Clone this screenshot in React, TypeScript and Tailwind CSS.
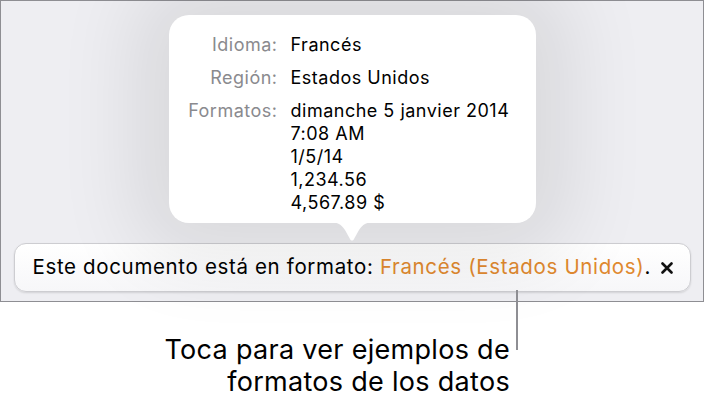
import React from "react";

const font = { fontFamily: "Inter, 'Noto Sans', sans-serif" };

export default function App() {
  return (
    <div className="w-[705px] h-[402px] bg-white" style={font}>
      <div className="w-[704px] h-[302px] border border-[#8e8e93] bg-[#eeeef2] flex flex-col items-center">
        <div className="relative mt-[14px] w-[367px] h-[208px] bg-white rounded-[20px] shadow-[0_0_80px_35px_rgba(0,0,0,0.09)] pt-[18px] text-[18px] leading-[23px] tracking-[0.5px]">
          <div className="grid grid-cols-[109px_1fr] gap-y-[10px]">
            <div className="text-right text-[#8a8a8e]">Idioma:</div>
            <div className="pl-[13px] text-black">Francés</div>
            <div className="text-right text-[#8a8a8e]">Región:</div>
            <div className="pl-[13px] text-black">Estados Unidos</div>
            <div className="text-right text-[#8a8a8e]">Formatos:</div>
            <div className="pl-[13px] text-black flex flex-col">
              <span>dimanche 5 janvier 2014</span>
              <span>7:08 AM</span>
              <span>1/5/14</span>
              <span>1,234.56</span>
              <span>4,567.89 $</span>
            </div>
          </div>
          <svg className="absolute left-[160px] top-[207px]" width="46" height="22" viewBox="0 0 46 22">
            <path d="M0 0 C8 0 12 2 16 8 L21 17 C22 19 24 19 25 17 L30 8 C34 2 38 0 46 0 Z" fill="white" />
          </svg>
        </div>
        <div className="mt-[20px] w-[677px] h-[49px] rounded-[12px] bg-gradient-to-b from-white to-[#f7f7f9] border border-[#cdcdd1] shadow-[0_1px_2px_rgba(0,0,0,0.12)] flex items-center pl-[18px] pr-[17px] text-[20.5px] tracking-[0.65px] text-black">
          <span>Este documento está en formato:&nbsp;</span>
          <span className="text-[#e0892f]">Francés (Estados Unidos)</span>
          <span>.</span>
          <span className="ml-auto flex items-center">
            <svg width="12" height="12" viewBox="0 0 12 12">
              <path d="M1.5 1.5 L10.5 10.5 M10.5 1.5 L1.5 10.5" stroke="#111" strokeWidth="2.6" strokeLinecap="round" />
            </svg>
          </span>
        </div>
      </div>
      <div className="relative flex justify-end pr-[195px]">
        <div className="absolute left-[516px] top-[-12px] w-[2px] h-[60px] bg-[#8e8e93]" />
        <div className="mt-[32px] text-right text-[27px] leading-[32px] tracking-[0.3px] text-black">
          <div>Toca para ver ejemplos de</div>
          <div>formatos de los datos</div>
        </div>
      </div>
    </div>
  );
}
